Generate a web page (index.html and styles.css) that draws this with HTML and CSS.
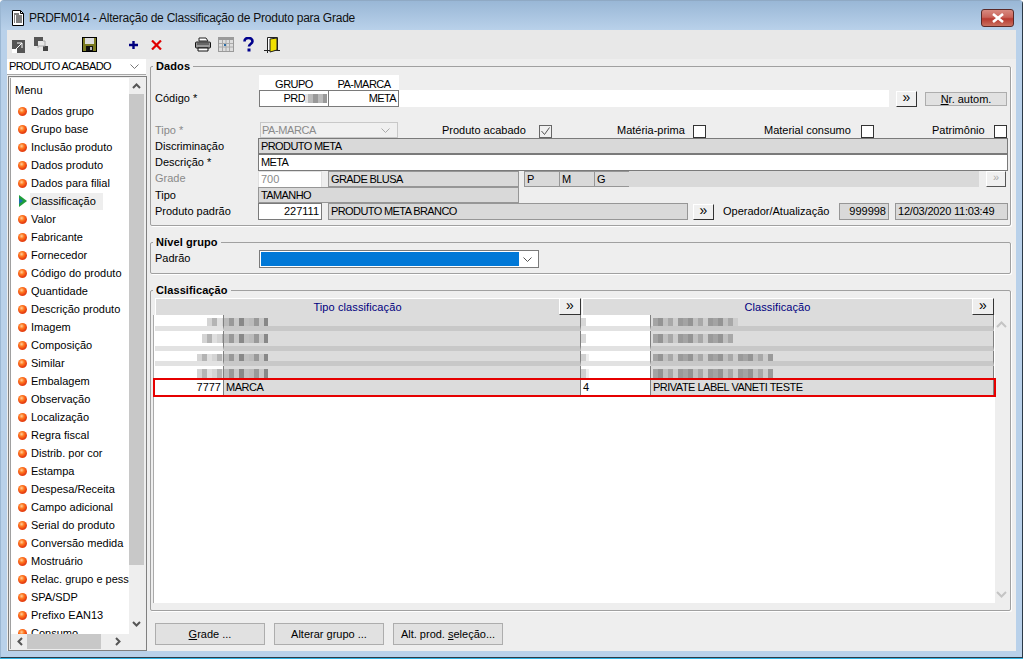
FILE: index.html
```html
<!DOCTYPE html>
<html lang="pt">
<head>
<meta charset="utf-8">
<title>PRDFM014</title>
<link rel="stylesheet" href="styles.css">
</head>
<body>
<div class="window">
  <header class="titlebar">
    <svg class="title-icon" width="14" height="16" viewBox="0 0 14 16"><path d="M1.5.5h8l3 3v12h-11z" fill="#fff" stroke="#000"/><path d="M3 4h5M3 6h1M5 6h6M3 8h1M5 8h6M3 10h1M5 10h6M3 12h1M5 12h6" stroke="#000"/><path d="M9.5.5v3h3" fill="none" stroke="#000"/></svg>
    <span class="title-text">PRDFM014 - Alteração de Classificação de Produto para Grade</span>
    <button class="close" type="button"><svg width="14" height="10" viewBox="0 0 14 10"><path d="M2 1l10 8M12 1L2 9" stroke="#fff" stroke-width="2.6"/></svg></button>
  </header>
  <div class="client">
    <div class="toolbar">
      <svg class="t t1" width="13" height="13" viewBox="0 0 13 13"><rect width="13" height="13" fill="#555"/><rect x="0" y="9" width="5" height="4" fill="#fff"/><path d="M3 10l7-7M5 3h5v5" stroke="#fff" fill="none"/></svg>
      <svg class="t t2" width="15" height="15" viewBox="0 0 15 15"><path d="M0 0h9v4H4v5H0z" fill="#555"/><rect x="9" y="9" width="5" height="5" fill="#444"/><path d="M9 4h2v5H4v2" fill="none" stroke="#aaa"/></svg>
      <svg class="t t3" width="15" height="15" viewBox="0 0 15 15"><rect x=".5" y=".5" width="14" height="14" fill="#7a7a20" stroke="#000"/><rect x="3" y="1" width="9" height="6" fill="#ddd"/><rect x="4" y="9" width="7" height="5" fill="#111"/><rect x="8" y="10" width="2" height="3" fill="#bbb"/></svg>
      <svg class="t t4" width="10" height="10" viewBox="0 0 10 10"><path d="M0 5h9M4.500 1v8" stroke="#00007f" stroke-width="2.400"/></svg>
      <svg class="t t5" width="11" height="10" viewBox="0 0 11 10"><path d="M1 .5l9 9M10 .5l-9 9" stroke="#e00000" stroke-width="2.200"/></svg>
      <svg class="t t6" width="16" height="15" viewBox="0 0 16 15"><path d="M4 1h7l2 3H4z" fill="#fff" stroke="#222"/><rect x=".5" y="5" width="15" height="6" rx="1" fill="#999" stroke="#111"/><path d="M3 11h10v3H3z" fill="#fff" stroke="#111"/><path d="M2 7h12" stroke="#333"/></svg>
      <svg class="t t7" width="16" height="15" viewBox="0 0 16 15"><rect width="16" height="15" fill="#9a9a9a"/><path d="M1 3h14v11H1z" fill="#ddd"/><path d="M4.500 3v11M8 3v11M11.500 3v11M1 6.500h14M1 10h14" stroke="#aaa"/><rect x="6" y="7" width="2" height="2" fill="#2a6ca8"/></svg>
      <svg class="t t8" width="11" height="15" viewBox="0 0 11 15"><path d="M1.500 4.500C1.500 2 3.500 1 5.500 1s4 1.200 4 3.300C9.500 7 6 7 6 9.500" fill="none" stroke="#00008c" stroke-width="2.600"/><rect x="4.500" y="11.500" width="3" height="3" fill="#00008c"/></svg>
      <svg class="t t9" width="16" height="16" viewBox="0 0 16 16"><path d="M3.500.5h10v13h-10z" fill="#fff" stroke="#222"/><path d="M6 2l7-1v12l-7 2z" fill="#f0e000" stroke="#222"/><path d="M0 13.500h3M13 13.500h3M3.500 13v3" stroke="#222"/></svg>
    </div>
    <div class="main">
      <aside class="sidebar">
        <div class="combo"><span class="combo-text">PRODUTO ACABADO</span><svg class="chev" width="9" height="5" viewBox="0 0 9 5"><path d="M.5.5l4 4 4-4" fill="none" stroke="#777"/></svg></div>
        <nav class="menu">
          <div class="menu-frame">
            <div class="menu-top">
              <ul class="menu-list">
                <li class="menu-title">Menu</li>
                <li class="item"><i class="ball"></i><span>Dados grupo</span></li>
                <li class="item"><i class="ball"></i><span>Grupo base</span></li>
                <li class="item"><i class="ball"></i><span>Inclusão produto</span></li>
                <li class="item"><i class="ball"></i><span>Dados produto</span></li>
                <li class="item"><i class="ball"></i><span>Dados para filial</span></li>
                <li class="item selected"><svg class="arrow" width="8" height="12" viewBox="0 0 8 12"><path d="M0 0l8 6-8 6z" fill="#1f9e3a"/><path d="M0 3l4 3-4 3z" fill="#1c6fb0"/></svg><span>Classificação</span></li>
                <li class="item"><i class="ball"></i><span>Valor</span></li>
                <li class="item"><i class="ball"></i><span>Fabricante</span></li>
                <li class="item"><i class="ball"></i><span>Fornecedor</span></li>
                <li class="item"><i class="ball"></i><span>Código do produto</span></li>
                <li class="item"><i class="ball"></i><span>Quantidade</span></li>
                <li class="item"><i class="ball"></i><span>Descrição produto</span></li>
                <li class="item"><i class="ball"></i><span>Imagem</span></li>
                <li class="item"><i class="ball"></i><span>Composição</span></li>
                <li class="item"><i class="ball"></i><span>Similar</span></li>
                <li class="item"><i class="ball"></i><span>Embalagem</span></li>
                <li class="item"><i class="ball"></i><span>Observação</span></li>
                <li class="item"><i class="ball"></i><span>Localização</span></li>
                <li class="item"><i class="ball"></i><span>Regra fiscal</span></li>
                <li class="item"><i class="ball"></i><span>Distrib. por cor</span></li>
                <li class="item"><i class="ball"></i><span>Estampa</span></li>
                <li class="item"><i class="ball"></i><span>Despesa/Receita</span></li>
                <li class="item"><i class="ball"></i><span>Campo adicional</span></li>
                <li class="item"><i class="ball"></i><span>Serial do produto</span></li>
                <li class="item"><i class="ball"></i><span>Conversão medida</span></li>
                <li class="item"><i class="ball"></i><span>Mostruário</span></li>
                <li class="item"><i class="ball"></i><span>Relac. grupo e pessoa</span></li>
                <li class="item"><i class="ball"></i><span>SPA/SDP</span></li>
                <li class="item"><i class="ball"></i><span>Prefixo EAN13</span></li>
                <li class="item"><i class="ball"></i><span>Consumo</span></li>
              </ul>
              <div class="vbar">
                <svg class="vbar-btn" width="9" height="6" viewBox="0 0 9 6"><path d="M1 5l3.500-3.500L8 5" fill="none" stroke="#555" stroke-width="2"/></svg>
                <div class="vthumb"></div>
                <svg class="vbar-btn" width="9" height="6" viewBox="0 0 9 6"><path d="M1 1l3.500 3.500L8 1" fill="none" stroke="#555" stroke-width="2"/></svg>
              </div>
            </div>
            <div class="hbar">
              <svg class="hbar-btn" width="6" height="9" viewBox="0 0 6 9"><path d="M5 1L1.500 4.500 5 8" fill="none" stroke="#555" stroke-width="2"/></svg>
              <div class="hthumb"></div>
              <svg class="hbar-btn" width="6" height="9" viewBox="0 0 6 9"><path d="M1 1l3.500 3.500L1 8" fill="none" stroke="#555" stroke-width="2"/></svg>
            </div>
          </div>
        </nav>
      </aside>
      <main class="content">
        <fieldset class="group dados">
          <legend>Dados</legend>
          <div class="code-head"><span class="head-cell">GRUPO</span><span class="head-cell">PA-MARCA</span></div>
          <div class="row code-row">
            <label class="lbl lbl-wide">Códi<u>g</u>o *</label>
            <div class="code-bar"><span class="box box-code right">PRD<b class="mosaic m-code"></b></span><span class="box box-code2 right">META</span></div>
            <button class="btn-more btn-code" type="button">»</button>
            <button class="btn-flat btn-auto" type="button"><u>N</u>r. autom.</button>
          </div>
          <div class="row tipo-row">
            <label class="lbl lbl-wide muted">Tipo *</label>
            <div class="select-off"><span>PA-MARCA</span><svg class="chev" width="9" height="5" viewBox="0 0 9 5"><path d="M.5.5l4 4 4-4" fill="none" stroke="#aaa"/></svg></div>
            <span class="chk-label chk-a">Produto acabado</span><span class="chk"><svg width="11" height="11" viewBox="0 0 11 11"><path d="M1.500 5l3 3.500 5-7" fill="none" stroke="#555"/></svg></span>
            <span class="chk-label chk-b">Matéria-prima</span><span class="chk"></span>
            <span class="chk-label chk-c">Material consumo</span><span class="chk"></span>
            <span class="chk-label chk-d">Patrimônio</span><span class="chk"></span>
          </div>
          <div class="row r16"><label class="lbl">Discriminação</label><span class="box gray w-full">PRODUTO META</span></div>
          <div class="row r17"><label class="lbl">Descrição *</label><span class="box w-full white">META</span></div>
          <div class="row r16 grade-row">
            <label class="lbl muted">Grade</label>
            <span class="box soft w-num muted">700</span>
            <span class="box lightgray w-name">GRADE BLUSA</span>
            <div class="sizes"><span class="box lightgray size">P</span><span class="box lightgray size">M</span><span class="box lightgray size">G</span></div>
            <div class="size-rest"></div>
            <button class="btn-more btn-off" type="button">»</button>
          </div>
          <div class="row r16"><label class="lbl">Tipo</label><span class="box lightgray w-tipo">TAMANHO</span></div>
          <div class="row r17">
            <label class="lbl">Produto padrão</label>
            <span class="box white w-num right strong">227111</span>
            <span class="box lightgray w-prod">PRODUTO META BRANCO</span>
            <button class="btn-more btn-prod" type="button">»</button>
            <span class="oper">Operador/Atualização</span>
            <span class="box lightgray w-op right">999998</span>
            <span class="box lightgray w-date">12/03/2020 11:03:49</span>
          </div>
        </fieldset>
        <fieldset class="group nivel">
          <legend>Nível grupo</legend>
          <div class="row nivel-row">
            <label class="lbl lbl-wide lift">Padrão</label>
            <div class="select"><span class="select-value"></span><svg class="chev" width="9" height="5" viewBox="0 0 9 5"><path d="M.5.5l4 4 4-4" fill="none" stroke="#555"/></svg></div>
          </div>
        </fieldset>
        <fieldset class="group classif">
          <legend>Classificação</legend>
          <div class="grid-head">
            <span class="gh gh-a">Tipo classificação</span><button class="btn-more gh-btn" type="button">»</button>
            <span class="gh gh-b">Classificação</span><button class="btn-more gh-btn" type="button">»</button>
          </div>
          <div class="grid-wrap">
            <div class="grid-body">
              <div class="blur-rows">
                <div class="grow stripe"><span class="c c1"><b class="mosaic m-a"></b></span><span class="c c2"><b class="mosaic m-b"></b></span><span class="c c3"><b class="mosaic m-tiny"></b></span><span class="c c4"><b class="mosaic m-c"></b></span></div>
                <div class="grow stripe"><span class="c c1"><b class="mosaic m-a2"></b></span><span class="c c2"><b class="mosaic m-b"></b></span><span class="c c3"><b class="mosaic m-tiny"></b></span><span class="c c4"><b class="mosaic m-d"></b></span></div>
                <div class="grow stripe"><span class="c c1"><b class="mosaic m-a3"></b></span><span class="c c2"><b class="mosaic m-b"></b></span><span class="c c3"><b class="mosaic m-tiny2"></b></span><span class="c c4"><b class="mosaic m-e"></b></span></div>
                <div class="grow"><span class="c c1"><b class="mosaic m-a3"></b></span><span class="c c2"><b class="mosaic m-b"></b></span><span class="c c3"><b class="mosaic m-tiny2"></b></span><span class="c c4"><b class="mosaic m-e"></b></span></div>
              </div>
              <div class="grow red-row"><span class="c c1 right">7777</span><span class="c c2">MARCA</span><span class="c c3">4</span><span class="c c4">PRIVATE LABEL VANETI TESTE</span></div>
            </div>
            <div class="grid-scroll">
              <svg width="11" height="7" viewBox="0 0 11 7"><path d="M1 6l4.500-4.500L10 6" fill="none" stroke="#c4c4c4" stroke-width="2"/></svg>
              <svg width="11" height="7" viewBox="0 0 11 7"><path d="M1 1l4.500 4.500L10 1" fill="none" stroke="#c4c4c4" stroke-width="2"/></svg>
            </div>
          </div>
        </fieldset>
        <div class="actions">
          <button class="btn-flat btn-action" type="button"><u>G</u>rade ...</button>
          <button class="btn-flat btn-action" type="button">Alterar <u>g</u>rupo ...</button>
          <button class="btn-flat btn-action" type="button">Alt. prod. <u>s</u>eleção...</button>
        </div>
      </main>
    </div>
  </div>
</div>
</body>
</html>
```
FILE: styles.css
```css
* { box-sizing: border-box; }
html, body { margin: 0; height: 100%; background: #fff; overflow: hidden; }
body { font: 11px/1 "Liberation Sans", Arial, sans-serif; color: #000; }
button { font: inherit; color: inherit; padding: 0; }
ul { list-style: none; margin: 0; padding: 0; }

.window {
  width: 1023px; height: 658px; display: flex; flex-direction: column;
  background: #b9d1ea; border: 1px solid #2c3a48; border-top-color: #8fa9c4; border-radius: 4px 4px 0 0;
  border-left-color: #9bb7d3;
  box-shadow: 0 1px 0 #33b5e5;
}
.titlebar {
  height: 29px; flex: none; display: flex; align-items: center; padding: 5px 2px 0 10px;
  background: linear-gradient(#99b7d6, #b9d1ea);
}
.title-icon { flex: none; }
.title-text { margin-left: 4px; font-size: 12px; color: #111; flex: 1; letter-spacing: -.24px; }
.close {
  width: 33px; height: 18px; margin: -1px 6px 0 0; border: 1px solid #5b2a28; border-radius: 3px;
  background: linear-gradient(#d88a80 0, #c9645a 45%, #b83a30 55%, #c9705f 100%);
  display: flex; align-items: center; justify-content: center;
}
.client { flex: 1; margin: 0 6px 6px 6px; display: flex; flex-direction: column; background: #eee; min-height: 0; }
.toolbar { height: 29px; flex: none; background: #e8e8e8; position: relative; display: flex; align-items: center; padding-left: 5px; }
.t { flex: none; }
.t1 { margin-top: 3px; }
.t2 { margin-left: 9px; margin-top: -1px; }
.t3 { margin-left: 33px; }
.t4 { margin-left: 32px; }
.t5 { margin-left: 12px; }
.t6 { margin-left: 33px; }
.t7 { margin-left: 7px; }
.t8 { margin-left: 9px; }
.t9 { margin-left: 10px; }

.main { flex: 1; display: flex; min-height: 0; }
.sidebar { width: 140px; flex: none; display: flex; flex-direction: column; }
.combo { height: 16px; flex: none; background: #fff; display: flex; align-items: center; padding: 0 7px 0 2px; border-bottom: 1px solid #a8a8a8; width: 139px; }
.combo-text { flex: 1; font-size: 11px; letter-spacing: -.6px; }
.chev { flex: none; }
.menu { height: 575px; flex: none; margin-top: 1px; margin-left: 1px; width: 139px; border: 1px solid #808080; padding: 1px; background: #eee; }
.menu-frame { height: 100%; border: 1px solid #a0a0a0; border-width: 0 0 0 1px; display: flex; flex-direction: column; background: #eee; }
.menu-top { flex: 1; display: flex; min-height: 0; }
.menu-list { width: 118px; flex: none; background: #fff; overflow: hidden; white-space: nowrap; }
.menu-title { height: 24px; line-height: 24px; padding-left: 4px; }
.item { height: 18px; display: flex; align-items: center; padding-left: 7px; }
.item span { margin-left: 3px; padding: 3px 1px; }
.ball {
  display: block; flex: none; width: 9px; height: 9px; border-radius: 50%;
  background: radial-gradient(circle at 40% 35%, #ffd0a0 0, #ff7a20 30%, #e83a10 65%, #c8a060 100%);
}
.arrow { flex: none; margin-left: 1px; margin-right: 0; }
.selected span { background: #eee; margin-left: 3px; padding: 3px 1px 3px 1px; width: 73px; }
.vbar { width: 15px; flex: none; display: flex; flex-direction: column; align-items: center; background: #eee; }
.vbar-btn { flex: none; margin: 5px 0; }
.vthumb { width: 15px; height: 471px; background: #c8c8c8; flex: none; }
.vbar-btn:last-child { margin-top: 56px; }
.hbar { height: 15px; flex: none; display: flex; align-items: center; padding-left: 6px; background: #eee; }
.hthumb { width: 74px; height: 15px; background: #c8c8c8; margin: 0 14px 0 4px; }

.content { flex: 1; min-width: 0; padding-left: 3px; }
.group { margin: 0; padding: 0; border: 1px solid #a0a0a0; border-radius: 2px; width: 861px; box-shadow: 1px 1px 0 #fff; }
.group legend { font-weight: bold; font-size: 11px; line-height: 12px; margin-left: 2px; padding: 0 3px; letter-spacing: .1px; }
.dados { height: 166px; margin-top: 1px; }
.nivel { height: 38px; margin-top: 10px; }
.classif { height: 327px; margin-top: 10px; }

.row { display: flex; align-items: center; padding-left: 4px; }
.r16 { height: 16px; }
.r17 { height: 17px; }
.lbl { width: 103px; flex: none; }
.lbl-wide { width: 104px; }
.lift { margin-top: -2px; }
.grade-row .lbl { margin-top: -2px; }
.muted { color: #8a8a8a; }
.right { justify-content: flex-end; text-align: right; }
u { text-underline-offset: 1px; }

.code-head { display: flex; margin: 3px 0 0 108px; height: 15px; letter-spacing: -.5px; }
.head-cell { width: 70px; background: #fff; display: flex; align-items: center; justify-content: center; padding-top: 3px; }
.code-row { height: 17px; }
.code-bar { display: flex; width: 630px; height: 17px; background: #fff; flex: none; }
.box {
  display: flex; align-items: center; height: 100%; flex: none; padding: 0 2px;
  border: 1px solid #7a7a7a; white-space: nowrap; overflow: hidden; letter-spacing: -.6px;
}
.box-code { width: 70px; padding-right: 1px; }
.box-code2 { width: 71px; margin-left: -1px; }
.btn-more {
  background: #f0f0f0; border: 1px solid; border-color: #fff #333 #333 #fff;
  font-size: 14px; line-height: 11px; padding-bottom: 3px; flex: none;
}
.btn-code { width: 21px; height: 16px; margin-left: 7px; }
.btn-flat { background: #e1e1e1; border: 1px solid #adadad; flex: none; }
.btn-auto { width: 82px; height: 14px; margin-left: 8px; line-height: 10px; }
.tipo-row { height: 16px; margin-top: 15px; }
.select-off {
  width: 138px; height: 16px; margin-left: 1px; flex: none; display: flex; align-items: center; letter-spacing: -.4px;
  justify-content: space-between; padding: 0 7px 0 1px; border: 1px solid #c8c8c8; background: #f0f0f0; color: #8a8a8a;
}
.chk-label { flex: none; }
.chk-a { width: 97px; margin-left: 44px; }
.chk-b { width: 76px; margin-left: 65px; }
.chk-c { width: 97px; margin-left: 58px; }
.chk-d { width: 62px; margin-left: 58px; }
.chk { width: 13px; height: 13px; border: 1px solid #333; background: #fff; flex: none; display: flex; align-items: center; justify-content: center; margin-top: 2px; }
.chk:has(svg) { border-color: #666; background: #f0f0f0; }
.w-full { width: 750px; }
.gray { background: #d9d9d9; }
.white { background: #fff; }
.lightgray { background: #d9d9d9; border-color: #969696; }
.soft { background: #fff; border-color: #e0e0e0; border-width: 1px 1px 0 1px; letter-spacing: 0; }
.w-num { width: 64px; }
.strong { border-color: #7a7a7a; letter-spacing: 0; }
.w-name { width: 191px; margin-left: 6px; }
.sizes { display: flex; margin-left: 5px; flex: none; height: 100%; }
.size { width: 36px; margin-right: -1px; }
.size-rest { width: 350px; height: 100%; background: #d9d9d9; flex: none; }
.btn-off { width: 20px; height: 16px; margin-left: 7px; color: #aaa; font-size: 11px; border-color: #fff #555 #555 #fff; }
.w-tipo { width: 261px; }
.w-prod { width: 360px; margin-left: 6px; }
.btn-prod { width: 21px; height: 16px; margin-left: 5px; }
.oper { width: 116px; margin-left: 9px; flex: none; }
.w-op { width: 50px; letter-spacing: 0; }
.w-date { width: 113px; margin-left: 6px; letter-spacing: -.2px; }

.nivel-row { margin-top: 2px; height: 18px; }
.select { width: 280px; height: 18px; flex: none; border: 1px solid #7a7a7a; background: #fff; display: flex; align-items: center; padding: 1px 6px 1px 1px; justify-content: space-between; }
.select-value { width: 258px; height: 14px; background: #0078d7; display: block; }

.grid-head { display: flex; margin: 2px 0 0 4px; height: 17px; }
.gh { background: #dcdcdc; color: #00007f; display: flex; align-items: center; justify-content: center; border-top: 1px solid #fff; border-left: 1px solid #fff; flex: none; letter-spacing: .1px; }
.gh-a { width: 404px; }
.gh-b { width: 390px; margin-left: 1px; }
.gh-btn { width: 22px; height: 17px; background: #eee; }
.grid-wrap { display: flex; height: 288px; margin-left: 2px; }
.grid-body { width: 842px; flex: none; background: #fff; border-left: 1px solid #aaa; }
.blur-rows { display: grid; grid-template-rows: 16px 20px 15px 12px; }
.grow { display: grid; grid-template-columns: 69px 357px 70px 343px; padding-left: 1px; white-space: nowrap; }
.c { border-right: 1px solid #808080; padding: 3px 2px 0; overflow: hidden; }
.c2, .c4 { background: #dcdcdc; }
.c1, .c3 { background: #fff; }
.c1 { padding: 3px 0 0; text-align: right; }
.c1.right { padding-right: 2px; }
.c2 { padding-left: 0; }
.c3 { padding-left: 0; }
.stripe .c1, .stripe .c3 { border-bottom: 5px solid #e2e2e2; }
.stripe .c2, .stripe .c4 { border-bottom: 5px solid #c8c8c8; }
.red-row { height: 19px; margin-left: -1px; width: 843px; border: 2px solid #e60000; padding-left: 0; align-items: stretch; }
.red-row .c { padding-top: 2px; letter-spacing: -.5px; }
.red-row .c1 { letter-spacing: 0; }
.red-row .c2 { padding-left: 2px; }
.red-row .c3 { padding-left: 2px; }
.grid-scroll { width: 13px; display: flex; flex-direction: column; align-items: center; justify-content: space-between; padding: 6px 0 5px; flex: none; margin-left: 0; }

.mosaic { display: inline-block; height: 9px; vertical-align: top; }
.m-code { width: 22px; background: linear-gradient(90deg, #e4e4e4 0 3px, #bbb 3px 8px, #999 8px 13px, #bbb 13px 18px, #999 18px 22px); }
.m-a, .m-a2, .m-a3 { background: repeating-linear-gradient(90deg, #d4d4d4 0 5px, #b4b4b4 5px 10px, #e0e0e0 10px 15px); }
.m-a { width: 16px; }
.m-a2 { width: 21px; }
.m-a3 { width: 26px; }
.m-b { width: 44px; background: repeating-linear-gradient(90deg, #bbb 0 5px, #999 5px 10px, #c8c8c8 10px 15px, #888 15px 20px, #c0c0c0 20px 25px); }
.m-tiny, .m-tiny2 { background: #d8d8d8; }
.m-tiny { width: 5px; }
.m-tiny2 { width: 8px; background: linear-gradient(90deg, #d0d0d0 0 5px, #eee 5px 8px); }
.m-c, .m-d, .m-e { background: repeating-linear-gradient(90deg, #a4a4a4 0 5px, #949494 5px 10px, #c0c0c0 10px 15px, #a8a8a8 15px 20px, #ccc 20px 25px, #9a9a9a 25px 30px); }
.m-c { width: 85px; }
.m-d { width: 80px; }
.m-e { width: 120px; }

.actions { display: flex; gap: 9px; margin: 12px 0 0 5px; }
.btn-action { width: 110px; height: 22px; }
```
